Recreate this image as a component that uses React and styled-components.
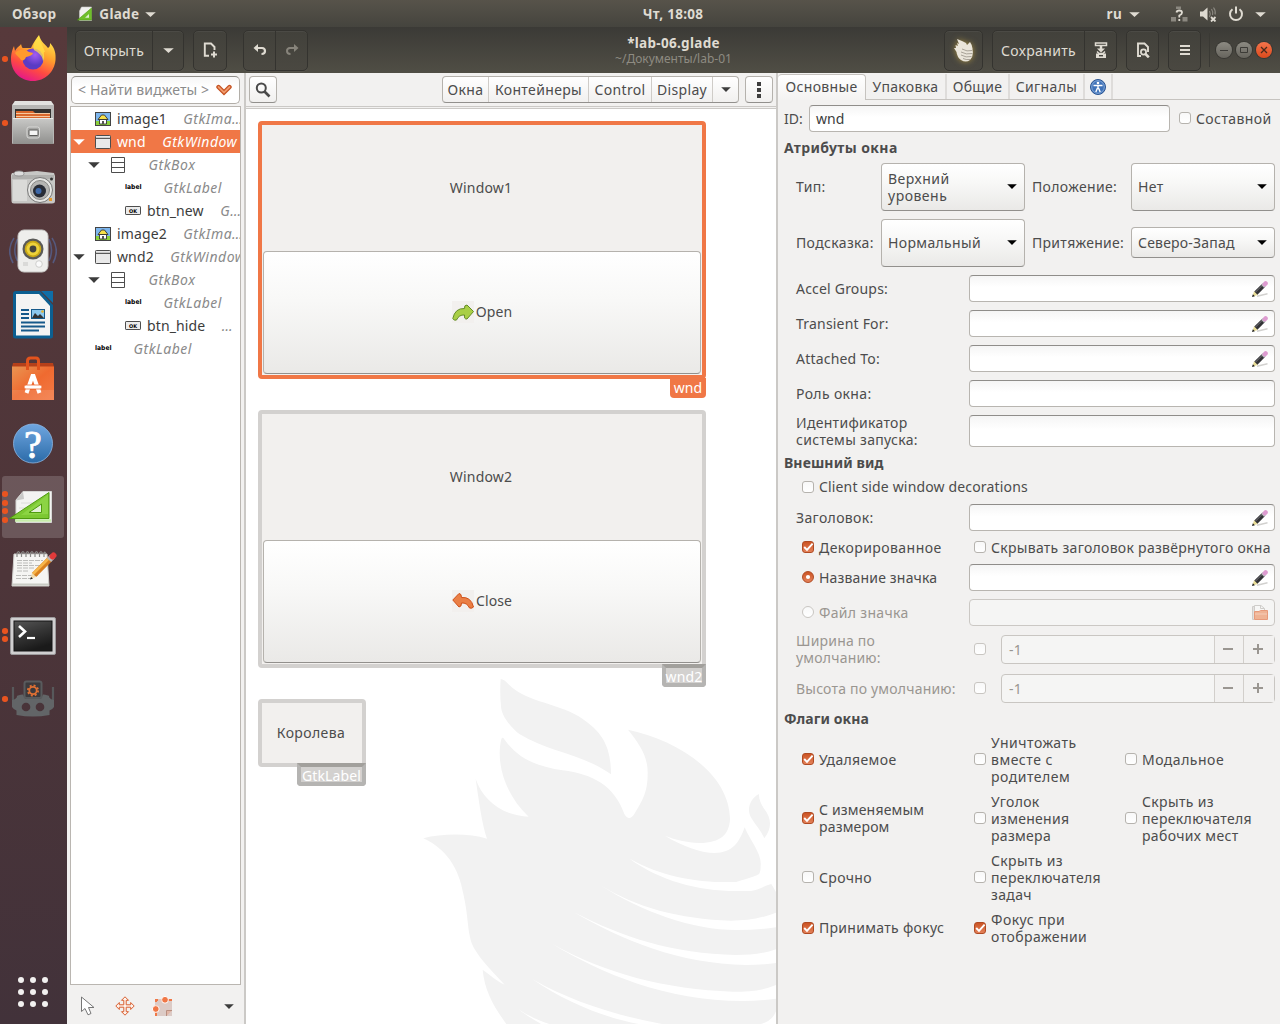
import React from "react";
import styled, { createGlobalStyle, css } from "styled-components";

const Global = createGlobalStyle`
  * { box-sizing: border-box; }
  html, body { margin: 0; padding: 0; }
  body {
    width: 1280px; height: 1024px; overflow: hidden;
    font-family: "Noto Sans", "Open Sans", sans-serif;
    font-size: 14px; line-height: 17px; color: #4c4c4c; letter-spacing: 0.35px;
  }
  svg { display: block; flex: none; }
`;

/* ---------- shell ---------- */
const Desktop = styled.div`
  display: flex; flex-direction: column; width: 1280px; height: 1024px; overflow: hidden;
`;
const TopBar = styled.div`
  height: 27px; flex: none; display: grid; grid-template-columns: 1fr auto 1fr; align-items: center;
  background: linear-gradient(#57534a, #45443e); color: #dfdbd2; font-weight: 700; font-size: 13.5px;
  padding: 1px 14px 0 12px; letter-spacing: 0.3px;
`;
const BarGroup = styled.div`
  display: flex; align-items: center; justify-content: ${(p) => (p.$end ? "flex-end" : "flex-start")};
`;
const BarItem = styled.div`
  display: flex; align-items: center; gap: ${(p) => p.$gap || 6}px; margin-left: ${(p) => p.$ml || 0}px;
`;
const Clock = styled.div`padding-left: 68px;`;
const Body = styled.div`display: flex; flex: 1; min-height: 0;`;
const Dock = styled.div`
  width: 67px; flex: none; display: flex; flex-direction: column;
  background: linear-gradient(#57393b, #4d3539 55%, #42323a);
`;
const DockItem = styled.div`
  height: 64px; flex: none; padding: 1px 3px 1px 2px;
`;
const DockTile = styled.div`
  height: 62px; display: flex; align-items: center; border-radius: 3px;
  background: ${(p) => (p.$active ? "rgba(255,255,255,0.17)" : "transparent")};
`;
const Dots = styled.div`width: 7px; display: flex; flex-direction: column; gap: 2.9px;`;
const Dot = styled.i`width: 5.6px; height: 5.6px; border-radius: 50%; background: #e95420;`;
const AppsGrid = styled.div`
  margin: auto 0 17px 18px; display: grid; grid-template-columns: repeat(3, 6px); gap: 6px;
  i { width: 6px; height: 6px; border-radius: 50%; background: #f2f1f0; }
`;
const AppWindow = styled.div`flex: 1; min-width: 0; display: flex; flex-direction: column; background: #f2f1f0;`;

/* ---------- header ---------- */
const Header = styled.div`
  height: 46px; flex: none; display: flex; align-items: flex-start; padding: 3px 8px 0;
  background: linear-gradient(#3b3a36, #504e45); color: #dfdbd2;
`;
const HeadGroup = styled.div`
  height: 41px; display: flex; margin-left: ${(p) => p.$ml || 0}px; border: 1px solid #34332f; border-radius: 5px;
  background: linear-gradient(#42413b, #4a4841); box-shadow: inset 0 1px rgba(255,255,255,0.05), 0 1px rgba(255,255,255,0.04);
`;
const HeadButton = styled.div`
  width: ${(p) => p.$w}px; display: flex; align-items: center; justify-content: center; padding-bottom: 1px;
  & + & { border-left: 1px solid #34332f; }
`;
const TitleBox = styled.div`
  flex: 1; display: flex; flex-direction: column; align-items: center; padding: 5px 0 0 95px;
`;
const Title = styled.div`font-weight: 700; font-size: 13.5px; line-height: 16px; letter-spacing: 0.3px;`;
const Subtitle = styled.div`font-size: 12px; line-height: 15px; color: #8e8b82; letter-spacing: 0;`;
const HeadRule = styled.div`width: 1px; height: 34px; margin: 3px 6px 0 8px; background: #3a3934;`;
const WinButtons = styled.div`display: flex; gap: 4px; padding-top: 12px;`;
const WinButton = styled.div`
  width: 16px; height: 16px; border-radius: 50%; display: grid; place-items: center;
  background: ${(p) => (p.$close ? "linear-gradient(#f4744c, #dc4a1c)" : "linear-gradient(#8c8a82, #66645d)")};
  box-shadow: 0 0 0 1px #383733;
`;

/* ---------- columns ---------- */
const Panes = styled.div`flex: 1; display: flex; min-height: 0;`;
const Divider = styled.div`width: 2px; flex: none; background: #cbc9c6;`;
const LeftPane = styled.div`width: 177px; flex: none; display: flex; flex-direction: column; padding: 3px 3px 0; letter-spacing: 0.12px;`;
const SearchField = styled.div`
  height: 28px; margin: 0 1px; border: 1px solid #b2aea8; border-top-color: #8f8d89; border-radius: 5px;
  background: linear-gradient(#f6f6f6, #fff 40%); display: flex; align-items: center; justify-content: space-between;
  padding: 0 7px 1px 6px; color: #8b8b8b; white-space: nowrap;
`;
const Tree = styled.div`
  height: 879px; margin-top: 2px; border: 1px solid #bab6b1; background: #fff; overflow: hidden;
`;
const TreeRow = styled.div`
  height: 23px; display: flex; align-items: center; white-space: nowrap; overflow: hidden;
  padding-left: ${(p) => p.$depth * 15 + 2}px; color: ${(p) => (p.$selected ? "#fff" : "#3c3c3c")};
  background: ${(p) => (p.$selected ? "#f07746" : "transparent")};
`;
const Expander = styled.div`width: 22px; flex: none;`;
const RowIcon = styled.div`width: 22px; flex: none;`;
const TypeName = styled.span`
  margin-left: 16.5px; font-style: italic; letter-spacing: 0.5px; color: ${(p) => (p.$selected ? "#fff" : "#8a8a8a")};
`;
const PointerBar = styled.div`flex: 1; display: flex; align-items: center; padding: 3px 7px 0 8px;`;
const PointerTool = styled.div`width: 37px; display: flex;`;
const PointerMenu = styled.div`margin-left: auto;`;

/* ---------- center ---------- */
const Center = styled.div`width: 530px; flex: none; display: flex; flex-direction: column;`;
const Toolbar = styled.div`
  height: 36px; flex: none; display: flex; padding: 3px 3px 0 3px; gap: 6px;
  border-bottom: 1px solid #cbc9c6; background: linear-gradient(#f2f1f0 33px, #cbc9c6 33px, #cbc9c6 34px, #f2f1f0 34px);
`;
const raised = css`
  border: 1px solid #b5b2ad; border-bottom-color: #92908d; border-radius: 4px;
  background: linear-gradient(#ffffff, #f8f8f7 40%, #eae9e7);
`;
const SmallButton = styled.div`
  ${raised} width: 28px; height: 27px; display: grid; place-items: center; background: linear-gradient(#fff, #f1f0ef);
`;
const Switcher = styled.div`
  ${raised} margin-left: auto; height: 27px; display: flex; background: linear-gradient(#fff, #f1f0ef);
`;
const SwitchItem = styled.div`
  width: ${(p) => p.$w}px; display: flex; align-items: center; justify-content: center; white-space: nowrap;
  & + & { border-left: 1px solid #cfccc8; }
`;
const Canvas = styled.div`
  flex: 1; background: #fff; padding: 12px; display: grid; grid-template: 1fr / 1fr; overflow: hidden;
`;
const Watermark = styled.div`grid-area: 1 / 1; justify-self: end; align-self: end; margin: 0 -16px -12px 0;`;
const Stack = styled.div`grid-area: 1 / 1; z-index: 1; display: flex; flex-direction: column; gap: 31px;`;
const Frame = styled.div`
  position: relative; width: ${(p) => p.$w}px; height: ${(p) => p.$h}px; flex: none; border-radius: 4px;
  border: 4px solid ${(p) => (p.$selected ? "#f07746" : "#d3d1cf")}; background: #f2f0ee;
  display: flex; flex-direction: column; padding: 0 1px 1px;
`;
const FrameLabel = styled.div`
  flex: 1; display: grid; place-items: center; padding: 0 2px 1px 0; letter-spacing: ${(p) => p.$ls ?? 0.2}px;
`;
const BigButton = styled.div`
  ${raised} height: 123px; display: flex; align-items: center; justify-content: center; gap: 2px; letter-spacing: 0.1px;
  padding-bottom: 2px;
`;
const ImageCell = styled.div`width: 22px; height: 22px; background: #f2f0ee;`;
const Tag = styled.div`
  position: absolute; right: -4px; color: #fff; height: ${(p) => (p.$selected ? 20 : 23)}px; white-space: nowrap;
  top: calc(100% + ${(p) => (p.$selected ? 3 : 0)}px); width: ${(p) => p.$w}px; letter-spacing: 0.15px;
  border-radius: 0 0 4px 4px; line-height: ${(p) => (p.$selected ? 20 : 17)}px;
  display: flex; justify-content: center;
  ${(p) => p.$selected ? css`background: #f07746;` : css`
    background: #d3d1cf; border: 4px solid #b5b4b2; border-top-color: #a2a09c;
  `}
`;

/* ---------- property editor ---------- */
const Right = styled.div`flex: 1; min-width: 0; display: flex; flex-direction: column;`;
const Tabs = styled.div`height: 27px; flex: none; display: flex; border-bottom: 1px solid #c6c3bf; padding-top: 1px;`;
const Tab = styled.div`
  width: ${(p) => p.$w}px; display: flex; align-items: center; justify-content: center; white-space: nowrap;
  border-right: ${(p) => (p.$active ? "1px solid #c6c3bf" : "2px solid #dedcda")};
  ${(p) => p.$active && css`
    background: linear-gradient(#fff, #f4f3f2); border-top: 1px solid #c6c3bf; border-radius: 4px 4px 0 0; margin-bottom: -1px;
    padding-bottom: 2px;
  `}
`;
const Form = styled.div`padding: 0 5px 0 6px; display: flex; flex-direction: column;`;
const Line = styled.div`
  display: flex; align-items: center; flex: none; margin-top: ${(p) => p.$mt}px; height: ${(p) => p.$h}px;
  padding: 0 0 1px ${(p) => p.$indent ?? 12}px; color: ${(p) => (p.$off ? "#9a9691" : "inherit")};
`;
const SectionTitle = styled.div`
  margin-top: ${(p) => p.$mt}px; height: 20px; line-height: 20px; font-weight: 700; flex: none;
  letter-spacing: ${(p) => p.$ls ?? 0.1}px;
`;
const Name = styled.div`
  width: ${(p) => p.$w}px; flex: none; white-space: pre-line; letter-spacing: ${(p) => p.$ls ?? 0.35}px;
`;
const Entry = styled.div`
  flex: 1; align-self: flex-start; height: ${(p) => p.$h || 27}px; margin-right: ${(p) => p.$mr || 0}px;
  display: flex; align-items: center; letter-spacing: 0.1px;
  border: 1px solid ${(p) => (p.$off ? "#cbc8c4" : "#b8b5b0")}; border-top-color: ${(p) => (p.$off ? "#cbc8c4" : "#8f8d8a")};
  border-radius: 4px; background: ${(p) => (p.$off ? "#f5f5f4" : "linear-gradient(#f5f5f5, #fff 45%)")};
  padding: 0 6px; color: #3c3c3c;
  svg { margin-left: auto; }
`;
const Combo = styled.div`
  ${raised} width: 144px; height: ${(p) => p.$h || 48}px; margin-top: ${(p) => (48 - (p.$h || 48)) >> 1}px;
  flex: none; align-self: flex-start; display: flex; align-items: center; letter-spacing: ${(p) => p.$ls ?? 0.35}px;
  justify-content: space-between; padding: 0 7px 1px 6px; white-space: pre-line;
`;
const Check = styled.div`
  width: 12px; height: 12px; flex: none; border-radius: ${(p) => (p.$round ? "50%" : "3px")};
  border: 1px solid ${(p) => (p.$on ? "#b04a22" : p.$off ? "#c9c6c2" : "#b6b3ae")};
  background: ${(p) => (p.$on ? "linear-gradient(#cb5424, #e4825a)" : "linear-gradient(#f8f8f8, #fff)")};
  display: grid; place-items: center;
  svg { overflow: visible; }
`;
const Option = styled.div`
  display: flex; align-items: center; gap: 5px; width: ${(p) => p.$w}px; flex: none; white-space: pre-line;
  margin-left: ${(p) => p.$ml || 0}px; letter-spacing: ${(p) => p.$ls ?? 0.35}px;
`;
const Spin = styled.div`
  width: 274px; height: 29px; margin-left: 15px; display: flex; border: 1px solid #c9c6c2; border-radius: 4px;
  background: #f5f5f4; color: #9a9691; align-self: flex-start;
`;
const SpinText = styled.div`flex: 1; padding: 5px 0 0 7px;`;
const SpinButton = styled.div`
  width: ${(p) => p.$w}px; border-left: 1px solid #d2cfcb; background: #f2f1f0; display: grid; place-items: center;
  padding: 0 2px 1px 0;
`;

/* ---------- icons ---------- */
const Caret = ({ w = 12, h = 6, c = "#dfdbd2" }) => (
  <svg width={w} height={h} viewBox="0 0 12 6" preserveAspectRatio="none"><path d="M0.2 0.2H11.8Q9 2.6 6 6Q3 2.600 0.2 0.2Z" fill={c} /></svg>
);
const Pencil = () => (
  <svg width="16" height="16" viewBox="0 0 16 16">
    <path d="M5 15.200L15.500 12.800" stroke="#d2d1cf" strokeWidth="1.400" />
    <path d="M3.600 12.400L11.500 4.500" stroke="#333336" strokeWidth="4.400" />
    <path d="M3.600 11L10.300 4.300" stroke="#7b7a80" strokeWidth="0.900" />
    <path d="M10.600 5.400L12.600 3.400" stroke="#b9b8bd" strokeWidth="4.400" />
    <path d="M12.800 3.200L13.600 2.400" stroke="#dd9bd0" strokeWidth="4.400" strokeLinecap="round" />
    <path d="M2 10.200L5.700 13.900L0.600 15.400Z" fill="#e8dc96" /><path d="M0 16L0.900 13.200L2.900 15.200Z" fill="#1d1d1d" />
  </svg>
);
const FolderDoc = () => (
  <svg width="16" height="16" viewBox="0 0 16 16">
    <path d="M0.5 1.5H2V14.5H0.5ZM2.5 0.5H9L12.5 3.5V8H2.5Z" fill="#f7f7f6" stroke="#cfcdca" />
    <path d="M8.5 0.8V3.5H12.3" fill="none" stroke="#cfcdca" />
    <path d="M2.5 6.5H7L8.5 5.5H15.5V14.5H2.5Z" fill="#efb394" stroke="#e79a7a" /><path d="M3 9H15" stroke="#f5cdb8" />
  </svg>
);
const Tick = () => (
  <svg width="10" height="10" viewBox="0 0 10 10"><path d="M1.2 5L4 7.8L9.6 1.6" fill="none" stroke="#fff" strokeWidth="1.9" /></svg>
);
const Bullet = () => (<svg width="10" height="10" viewBox="0 0 10 10"><circle cx="5" cy="5" r="2.100" fill="#fff" /></svg>);

const treeIcons = {
  image: (
    <svg width="16" height="14" viewBox="0 0 16 14">
      <rect x="0.5" y="0.5" width="15" height="13" fill="#7db6ee" stroke="#444" /><path d="M1 9H15V13H1Z" fill="#8bd13c" />
      <path d="M4.5 7.5H11.5V12H4.5Z" fill="#fff" stroke="#333" strokeWidth="0.9" />
      <path d="M3 7.5L6.5 3H9.5L13 7.5Z" fill="#f6e04a" stroke="#333" strokeWidth="0.9" /><path d="M7 9H9V12H7Z" fill="#555" />
    </svg>
  ),
  window: (
    <svg width="16" height="14" viewBox="0 0 16 14">
      <rect x="0.5" y="0.5" width="15" height="13" rx="0.8" fill="#e9e9e9" stroke="#4d4d4d" />
      <path d="M1 2.5H15" stroke="#c9c9c9" /><path d="M0.5 3.5H15.5" stroke="#5a5a5a" />
    </svg>
  ),
  box: (
    <svg width="16" height="16" viewBox="0 0 16 16">
      <path d="M1.5 0.5H14.5V15.5H1.5ZM1.5 5.5H14.5M1.5 10.5H14.5" fill="#fff" stroke="#4d4d4d" />
    </svg>
  ),
  label: (
    <svg width="17" height="16" viewBox="0 0 17 16">
      <text x="0" y="9.400" fontFamily="DejaVu Sans" fontWeight="700" fontSize="6.500" letterSpacing="0" textLength="16.5" lengthAdjust="spacingAndGlyphs" fill="#000">label</text>
    </svg>
  ),
  button: (
    <svg width="16" height="16" viewBox="0 0 16 16">
      <rect x="0.5" y="3.5" width="15" height="8" rx="0.6" fill="#ececec" stroke="#4d4d4d" />
      <text x="4" y="9.500" fontFamily="DejaVu Sans" fontWeight="700" fontSize="5" letterSpacing="0" textLength="8" lengthAdjust="spacingAndGlyphs" fill="#000">OK</text>
    </svg>
  ),
};

const GladeGlyph = ({ s = 48 }) => (
  <svg width={s} height={s} viewBox="0 0 48 48">
    <path d="M14 8.5H42.500V39.500H7V17Z" fill="#f3f3f2" stroke="#d6d6d4" />
    <path d="M14 8.500L15 16L7 17.500Z" fill="#c9c9c8" /><path d="M12 20H36M10 25H30" stroke="#dcdcdb" />
    <path d="M40 9.500V35.500H0.500Z" fill="#7cc832" stroke="#4f9a10" strokeLinejoin="round" />
    <path d="M39 11.500V31L12 32Z" fill="#98dc50" opacity="0.6" />
    <path d="M32.500 21V29.500H20Z" fill="#e4f0d8" stroke="#4f9a10" />
    <path d="M6 37.500H42" stroke="#c6ecaa" strokeWidth="2.500" />
  </svg>
);
const GladeSmall = () => (
  <svg width="16" height="16" viewBox="0 0 16 16">
    <path d="M4.500 1H14.500V14.500H2.500V5Z" fill="#f1f1ef" stroke="#c9c9c7" strokeWidth="0.600" />
    <path d="M14.500 2V14H0.500Z" fill="#6fbf2a" stroke="#4f9a10" strokeWidth="0.600" /><path d="M12 8V11.800H8Z" fill="#dff0d0" />
  </svg>
);

const Firefox = () => (
  <svg width="48" height="48" viewBox="0 0 48 48">
    <defs>
      <linearGradient id="ff1" x1="0.75" y1="0" x2="0.3" y2="1"><stop offset="0" stopColor="#fff04f" /><stop offset="0.4" stopColor="#ffa02d" /><stop offset="0.7" stopColor="#ff4a42" /><stop offset="1" stopColor="#e3158e" /></linearGradient>
      <radialGradient id="ff2" cx="0.6" cy="0.3"><stop offset="0" stopColor="#a35cf2" /><stop offset="1" stopColor="#5a3bc4" /></radialGradient>
    </defs>
    <path d="M30 0C32 7 36 9 39 13C41 12 41 10 41 8C46 13 47 19 46.500 25C45.500 37 36 46 24 46C11 46 2 36 2 24C2 18 4 13 5 11L6 16C8 12 11 11 12 9C13 12 13 13 14 13L22 13C24 8 27 4 30 0Z" fill="url(#ff1)" />
    <circle cx="24" cy="24" r="10.500" fill="url(#ff2)" />
    <path d="M30 1C27 5 23 10 25 15C28 17 33 19 34 26C37 22 33 16 36 17C33 9 31 7 30 1Z" fill="#ffe14a" opacity="0.75" />
    <path d="M6 18C10 14 15 14 20 17L24 18C23 21 20 21 17 22C16 25 14 26 12 25C10 22 8 21 6 18Z" fill="#ff9a2c" />
  </svg>
);
const Files = () => (
  <svg width="48" height="48" viewBox="0 0 48 48">
    <defs><linearGradient id="fl1" x1="0" y1="0" x2="0" y2="1"><stop offset="0" stopColor="#c9c9c7" /><stop offset="1" stopColor="#90908e" /></linearGradient></defs>
    <path d="M6 2H42L45 6V44Q45 45 44 45H4Q3 45 3 44V6Z" fill="#b7b7b5" /><path d="M6 2H42L44.500 6H3.500Z" fill="#e2e2e0" />
    <path d="M6 10H42V20H6Z" fill="#343230" /><path d="M7 12H24L26 14H41V20H7Z" fill="#d8672c" /><path d="M7 14.500H41M7 17.500H41" stroke="#f5c9a0" />
    <path d="M4 19H44V45H4Z" fill="url(#fl1)" /><path d="M4 19.500H44" stroke="#e9e9e7" />
    <rect x="18" y="28" width="12.500" height="11" rx="2" fill="#a5a5a3" stroke="#d8d8d6" /><rect x="20" y="31" width="9" height="5.500" rx="0.500" fill="#f5f5f4" stroke="#5a5a58" />
  </svg>
);
const Camera = () => (
  <svg width="48" height="48" viewBox="0 0 48 48">
    <path d="M3 10L16 9L28 8L45 10L46 13V38Q46 40.500 43 40.500H5Q2.500 40.500 2.500 38L2 12Z" fill="#c7c7c5" />
    <path d="M3 12H45V16H3Z" fill="#a0a09e" opacity="0.6" /><path d="M4 17H18V38H4Z" fill="#e2e2e0" opacity="0.7" />
    <ellipse cx="10" cy="10.500" rx="5" ry="2.500" fill="#ddd" stroke="#888" strokeWidth="0.800" />
    <circle cx="31" cy="27" r="12.500" fill="#e6e6e4" stroke="#777" /><circle cx="31" cy="27" r="9.500" fill="#b5b5b3" stroke="#8a8a88" />
    <circle cx="30.500" cy="28" r="6.500" fill="#282c36" /><circle cx="29.500" cy="28" r="3" fill="#3d68a8" />
    <circle cx="42.500" cy="16" r="1.500" fill="#333" /><path d="M40 35H43V38H40Z" fill="#e59a2e" />
  </svg>
);
const Speaker = () => (
  <svg width="48" height="48" viewBox="0 0 48 48">
    <g fill="none" stroke="#55597e" strokeWidth="1.600"><path d="M5 11Q-3 23 4 36M43 11Q51 23 44 36M8.500 12Q3 23 8.500 34M40 12Q45 23 40 34" /></g>
    <rect x="9" y="3" width="30" height="42" rx="6" fill="#eeeeec" stroke="#c8c8c6" />
    <circle cx="24" cy="22" r="10.500" fill="#5a5a58" /><circle cx="24" cy="22" r="8.300" fill="#c9a817" /><circle cx="24" cy="22" r="6.500" fill="#edd23b" />
    <circle cx="24" cy="22" r="3.400" fill="#44443e" /><circle cx="30" cy="37" r="3.300" fill="#fafafa" stroke="#cfcfcd" /><path d="M14 35H19V39H14Z" fill="#dadad8" />
  </svg>
);
const Writer = () => (
  <svg width="48" height="48" viewBox="0 0 48 48">
    <path d="M7 0H31L44 14V45Q44 47.500 41.500 47.500H6.500Q4 47.500 4 45V3Q4 0 7 0Z" fill="#0c5f91" />
    <path d="M7 3H30L41 15V44.500H7Z" fill="#f4f4f3" /><path d="M32 0H44V12Z" fill="#0f6ea8" />
    <path d="M12 19H20M12 23H20M12 27H20M12 31.500H36M12 35.500H36M12 39.500H30" stroke="#16598a" strokeWidth="2" />
    <rect x="22.500" y="18.500" width="13" height="9" fill="#8cc8ee" stroke="#16598a" /><path d="M23 27L26 22L29 25L31 23L35 27Z" fill="#333" /><circle cx="33.500" cy="20.500" r="1.300" fill="#e7b32a" />
  </svg>
);
const Bag = () => (
  <svg width="48" height="48" viewBox="0 0 48 48">
    <defs><linearGradient id="bg1" x1="0" y1="0" x2="1" y2="1"><stop offset="0" stopColor="#e99552" /><stop offset="0.5" stopColor="#ef6a30" /><stop offset="1" stopColor="#f37a46" /></linearGradient></defs>
    <path d="M4 8H44L45 12H3Z" fill="#b5401a" /><path d="M3 11.500H45V45H3Z" fill="url(#bg1)" /><path d="M3 35H45V45H3Z" fill="#fff" opacity="0.100" />
    <path d="M18.500 15V6Q18.500 3 21.500 3H27Q29.500 3 29.500 6V15" fill="none" stroke="#e2531d" strokeWidth="3" />
    <path d="M17.500 38L23.500 21H24.500L30.500 38" fill="none" stroke="#fff" strokeWidth="4" /><rect x="15" y="30" width="18" height="4" rx="2" fill="#fff" stroke="#ee6b32" strokeWidth="0.800" />
  </svg>
);
const HelpMark = styled.text`font: 40px "Liberation Serif", serif; letter-spacing: 0;`;
const Help = () => (
  <svg width="48" height="48" viewBox="0 0 48 48">
    <defs><linearGradient id="hp1" x1="0" y1="0" x2="0" y2="1"><stop offset="0" stopColor="#6fa6e0" /><stop offset="1" stopColor="#2b6ba8" /></linearGradient></defs>
    <circle cx="24" cy="24.500" r="19.500" fill="url(#hp1)" stroke="#8db7e4" strokeWidth="0.800" />
    <HelpMark x="24" y="38.500" textAnchor="middle" fill="#fff" stroke="#fff" strokeWidth="0.900">?</HelpMark>
  </svg>
);
const Notes = () => (
  <svg width="48" height="48" viewBox="0 0 48 48">
    <path d="M5 7H38L40 39H3Z" fill="#f5f5f3" stroke="#cfcfcc" /><path d="M3 37.500H40" stroke="#c9cbc4" strokeWidth="2" />
    <path d="M8 13.500H34M8 16H23M8 18.500H32M8 21H26M8 24H20M7 28.500H29M7 31.500H23" stroke="#bcbcba" strokeDasharray="5 1" />
    <path d="M8 10V6Q10 3 11 7M12.500 10V6Q14.500 3 15.500 7M17 10V6Q19 3 20 7M21.500 10V6Q23.500 3 24.500 7M26 10V6Q28 3 29 7M30.500 10V6Q32.500 3 33.500 7M35 10V6Q36 4 37 7" fill="none" stroke="#8a8a88" strokeWidth="1.200" />
    <path d="M25 28L41 12" stroke="#d9801f" strokeWidth="6" /><path d="M24 27L40 11" stroke="#f7b64a" strokeWidth="2.500" /><path d="M40 13L43.500 9.500" stroke="#b9b9bb" strokeWidth="6" />
    <path d="M43.500 9.500L44.500 8.500" stroke="#e23a3a" strokeWidth="6" strokeLinecap="round" /><path d="M23 26L27 30L21.500 32Z" fill="#f1dcae" /><path d="M21 32.500L22 30L24 31.500Z" fill="#222" />
  </svg>
);
const Terminal = () => (
  <svg width="48" height="48" viewBox="0 0 48 48">
    <defs><linearGradient id="tm1" x1="0" y1="0" x2="0.400" y2="1"><stop offset="0" stopColor="#555" /><stop offset="0.5" stopColor="#363636" /><stop offset="1" stopColor="#1a1a1a" /></linearGradient></defs>
    <rect x="1.500" y="6.500" width="45" height="37" rx="1.500" fill="#d0cfd0" stroke="#9c9a9c" /><rect x="5" y="10" width="38" height="30" fill="url(#tm1)" stroke="#151515" />
    <path d="M10 15L16 20.500L10 26" fill="none" stroke="#fff" strokeWidth="2.600" /><path d="M18 27H26" stroke="#fff" strokeWidth="2.200" />
  </svg>
);
const Robot = () => (
  <svg width="48" height="48" viewBox="0 0 48 48">
    <path d="M4 12V25M44 12V25" stroke="#57595b" strokeWidth="2.200" />
    <path d="M3 25Q8 24 8 21Q9 20 14 19.500L16 23.500H32L34 19.500Q39 20 40 21Q40 24 45 25V32Q43 35 40.500 35.500V40Q24 43 7.500 40V35.500Q5 35 3 32Z" fill="#626567" />
    <rect x="15.500" y="6.500" width="17" height="16.500" rx="2" fill="#3c3a3d" stroke="#595b5d" strokeWidth="2" />
    <circle cx="24" cy="15.500" r="3.700" fill="none" stroke="#de7034" strokeWidth="1.800" /><circle cx="24" cy="15.500" r="5.100" fill="none" stroke="#de7034" strokeWidth="1.800" strokeDasharray="2 2" />
    <circle cx="17" cy="32" r="4.300" fill="#493439" /><circle cx="31" cy="32" r="4.300" fill="#493439" />
  </svg>
);

const BIRD = "M22 523C80 508 160 508 213 524C198 480 190 420 179 345C200 405 255 455 338 458C270 395 238 300 256 225Q260 216 266 227C310 290 370 308 440 319C530 330 595 365 625 450Q639 474 655 450C690 395 695 370 695 325C695 275 670 240 636 197C790 230 940 330 942 465C940 510 915 537 850 537C810 535 780 528 747 515C800 548 860 567 895 567C950 567 970 535 986 490C1005 535 1038 570 1034 605Q1034 626 1028 631C1010 641 980 648 960 654C850 657 740 640 641 584C730 650 850 682 965 681H1005C1030 678 1045 665 1066 660L1080 684V746C1030 765 990 770 945 770C790 765 660 730 551 662C680 745 830 797 960 798Q1030 798 1080 790V856C1040 870 1000 873 960 873C770 870 620 820 474 745C620 830 790 900 990 903Q1050 902 1080 897V963C1040 980 1000 983 950 983C750 975 570 930 408 839C560 930 750 1010 980 1011Q1040 1010 1080 1004V1042Q1070 1070 1035 1080H738C600 1055 460 1010 350 946C440 1010 560 1060 668 1080H400C365 1068 335 1055 308 1036C330 1055 360 1070 375 1080H271C235 1030 205 980 200 917C225 935 240 950 266 962C220 915 180 870 168 840C153 795 158 760 142 690C128 610 90 555 22 523Z";
const BirdMark = () => (
  <svg width="364" height="360" viewBox="0 0 1092 1080" fill="#f2f2f2">
    <path d={BIRD} />
    <path d="M254 45Q264 45 280 63C330 115 440 120 500 165C560 205 585 250 585 331C500 270 400 265 310 210C285 190 255 155 255 125Q251 90 254 45Z" />
    <path d="M1029 390C1000 405 990 440 1008 465C1018 482 1035 500 1045 523C1070 490 1065 460 1045 435C1035 420 1028 405 1029 390Z" />
  </svg>
);
const BirdLogo = styled.svg`filter: drop-shadow(0 0 3px rgba(230, 190, 70, 0.6)); overflow: visible;`;

const GoArrow = ({ back }) => (
  <svg width="22" height="22" viewBox="0 0 22 22">
    {back ? (
      <path d="M0.800 10L7 3.500Q9.500 3.500 9.500 7.500Q19 6.500 21.500 17Q20 18.800 17.500 18Q15 12.500 9.500 13Q9.500 17 7 17Z" fill="#ea7f45" stroke="#cf5018" strokeLinejoin="round" />
    ) : (
      <path d="M21.500 10.500L15 4Q12 4 12.500 7.500Q3 7 0.800 17.500Q2 20 4.500 19Q7 13.500 12.500 14Q12 18.500 15 18Z" fill="#a9cf46" stroke="#648c28" strokeLinejoin="round" />
    )}
  </svg>
);

/* ---------- data ---------- */
const dock = [
  { icon: <Firefox />, dots: 1 }, { icon: <Files />, dots: 1 }, { icon: <Camera />, dots: 0 }, { icon: <Speaker />, dots: 0 },
  { icon: <Writer />, dots: 0 }, { icon: <Bag />, dots: 0 }, { icon: <Help />, dots: 0 }, { icon: <GladeGlyph />, dots: 4, active: true },
  { icon: <Notes />, dots: 0 }, { icon: <Terminal />, dots: 2 }, { icon: <Robot />, dots: 1 },
];
const tree = [
  { depth: 0, icon: "image", name: "image1", type: "GtkIma…" },
  { depth: 0, icon: "window", name: "wnd", type: "GtkWindow", open: true, selected: true },
  { depth: 1, icon: "box", type: "GtkBox", open: true },
  { depth: 2, icon: "label", type: "GtkLabel" },
  { depth: 2, icon: "button", name: "btn_new", type: "G…" },
  { depth: 0, icon: "image", name: "image2", type: "GtkIma…" },
  { depth: 0, icon: "window", name: "wnd2", type: "GtkWindow", open: true },
  { depth: 1, icon: "box", type: "GtkBox", open: true },
  { depth: 2, icon: "label", type: "GtkLabel" },
  { depth: 2, icon: "button", name: "btn_hide", type: "…" },
  { depth: 0, icon: "label", type: "GtkLabel" },
];
const flags = [
  { mt: 5, h: 51, items: [["Удаляемое", true], ["Уничтожать\nвместе с\nродителем", false, 0.5], ["Модальное", false, 0.5]] },
  { mt: 8, h: 51, items: [["С изменяемым\nразмером", true, 0.17], ["Уголок\nизменения\nразмера", false, 0.3], ["Скрыть из\nпереключателя\nрабочих мест", false]] },
  { mt: 8, h: 51, items: [["Срочно", false], ["Скрыть из\nпереключателя\nзадач", false]] },
  { mt: 8, h: 34, items: [["Принимать фокус", true, 0.3], ["Фокус при\nотображении", true, 0.45]] },
];
const flagWidths = [172, 151, 150];

const Toggle = ({ on, off, label, w, ml, ls, round }) => (
  <Option $w={w} $ml={ml} $ls={ls}>
    <Check $on={on} $off={off} $round={round}>{on && (round ? <Bullet /> : <Tick />)}</Check>
    <span>{label}</span>
  </Option>
);

const SizeRow = ({ mt, label }) => (
  <Line $mt={mt} $h={29} $off>
    <Name $w={178} $ls={0.2}>{label}</Name>
    <Check $off />
    <Spin>
      <SpinText>-1</SpinText>
      <SpinButton $w={29}><svg width="10" height="10" viewBox="0 0 10 10"><path d="M0 5H10" stroke="#9a9691" strokeWidth="2" /></svg></SpinButton>
      <SpinButton $w={31}><svg width="10" height="10" viewBox="0 0 10 10"><path d="M0 5H10M5 0V10" stroke="#9a9691" strokeWidth="2" /></svg></SpinButton>
    </Spin>
  </Line>
);

export default function App() {
  return (
    <Desktop>
      <Global />
      <TopBar>
        <BarGroup>
          <span>Обзор</span>
          <BarItem $ml={21}>
            <GladeSmall /><span>Glade</span><Caret w={11} h={5} />
          </BarItem>
        </BarGroup>
        <Clock>Чт, 18:08</Clock>
        <BarGroup $end>
          <BarItem $gap={7}><span>ru</span><Caret w={11} h={5} /></BarItem>
          <BarItem $ml={31} $gap={11}>
            <svg width="17" height="16" viewBox="0 0 17 16" fill="#8b8880">
              <path d="M0 11H5V15.500H0ZM11.500 11H16.500V15.500H11.500ZM5 0.500H10V3H5Z" />
              <path d="M5.500 6.500Q5.800 4.500 8.300 4.500Q11 4.500 11 6.800Q11 8.300 8.300 9.500V11.500M8.300 13V15" fill="none" stroke="#dfdbd2" strokeWidth="1.800" />
            </svg>
            <svg width="18" height="16" viewBox="0 0 18 16">
              <path d="M1 5.500H4L8.500 1.500V14.500L4 10.500H1Z" fill="#dfdbd2" />
              <path d="M10.500 5Q12 8 10.500 11M12.500 3Q14.500 6 13.500 9M14.500 1.500Q17 5 16 8.500" fill="none" stroke="#8b8880" strokeWidth="1.200" />
              <path d="M12 11L16.500 15.500M16.500 11L12 15.500" stroke="#dfdbd2" strokeWidth="1.800" />
            </svg>
            <svg width="16" height="16" viewBox="0 0 16 16" fill="none" stroke="#dfdbd2" strokeWidth="2">
              <path d="M4.500 3.200A6 6 0 1 0 11.500 3.200M8 0.500V7.500" />
            </svg>
            <Caret w={11} h={5} />
          </BarItem>
        </BarGroup>
      </TopBar>
      <Body>
        <Dock>
          {dock.map((d, i) => (
            <DockItem key={i}>
              <DockTile $active={d.active}>
                <Dots>{Array.from({ length: d.dots }, (_, k) => <Dot key={k} />)}</Dots>
                {d.icon}
              </DockTile>
            </DockItem>
          ))}
          <AppsGrid>{Array.from({ length: 9 }, (_, k) => <i key={k} />)}</AppsGrid>
        </Dock>
        <AppWindow>
          <Header>
            <HeadGroup>
              <HeadButton $w={76}>Открыть</HeadButton>
              <HeadButton $w={31}><Caret w={11} h={5} /></HeadButton>
            </HeadGroup>
            <HeadGroup $ml={9}>
              <HeadButton $w={32}>
                <svg width="15" height="16" viewBox="0 0 15 16" fill="none" stroke="#dfdbd2">
                  <path d="M6 13.800H1.800V1.500H8L11.500 5V8" strokeWidth="1.900" /><path d="M8 12.500H14M11 9.500V15.500" strokeWidth="2" />
                </svg>
              </HeadButton>
            </HeadGroup>
            <HeadGroup $ml={16}>
              <HeadButton $w={31}>
                <svg width="14" height="14" viewBox="0 0 14 14"><path d="M5 1V9L0.500 5Z" fill="#dfdbd2" /><path d="M3 5H9Q12 5.200 12 8Q12 11 8.500 11" fill="none" stroke="#dfdbd2" strokeWidth="2.200" /></svg>
              </HeadButton>
              <HeadButton $w={32}>
                <svg width="14" height="14" viewBox="0 0 14 14"><path d="M9 1V9L13.500 5Z" fill="#87847b" /><path d="M11 5H5Q2 5.200 2 8Q2 11 5.500 11" fill="none" stroke="#87847b" strokeWidth="2" /></svg>
              </HeadButton>
            </HeadGroup>
            <TitleBox>
              <Title>*lab-06.glade</Title>
              <Subtitle>~/Документы/lab-01</Subtitle>
            </TitleBox>
            <HeadGroup>
              <HeadButton $w={37}>
                <BirdLogo width="22" height="25" viewBox="0 0 22 25">
                  <path d="M4 1L9 3L13 5L14 7L17 4Q20 8 19.500 12Q21 18 17 22Q13 25 8 22Q4 19 3.500 14L1 10L3 10L2.500 7L5 8L4 5L6 6Z" fill="#eae5da" />
                  <path d="M9 11Q14 14 19 12.500M8 14Q13 17 19.500 15.500M8 17Q13 20 18.500 18.500M10 20.500Q13 22 17 21.500" fill="none" stroke="#8b857a" strokeWidth="0.700" />
                </BirdLogo>
              </HeadButton>
            </HeadGroup>
            <HeadGroup $ml={9}>
              <HeadButton $w={91}>Сохранить</HeadButton>
              <HeadButton $w={32}>
                <svg width="14" height="16" viewBox="0 0 14 16" fill="none" stroke="#dfdbd2">
                  <path d="M1.500 1H12.500V3.500H1.500Z" strokeWidth="1.500" /><path d="M7 4V8" strokeWidth="2.500" /><path d="M3 6.500H11L7 10.500Z" fill="#dfdbd2" stroke="none" />
                  <path d="M3 9.500L5 11.500H9L11 9.500" strokeWidth="1.500" /><path d="M2 11.500H12V16H2Z" fill="#dfdbd2" stroke="none" /><path d="M5 13.700H9" stroke="#45443e" strokeWidth="1.400" />
                </svg>
              </HeadButton>
            </HeadGroup>
            <HeadGroup $ml={9}>
              <HeadButton $w={31}>
                <svg width="14" height="16" viewBox="0 0 14 16" fill="none" stroke="#dfdbd2" strokeWidth="1.900">
                  <path d="M5 14H2V1.500H8.500L12 5V10" /><circle cx="7.500" cy="10" r="2.600" strokeWidth="1.700" /><path d="M9 11.500L12.800 15.300" strokeWidth="2.600" />
                </svg>
              </HeadButton>
            </HeadGroup>
            <HeadGroup $ml={9}>
              <HeadButton $w={31}>
                <svg width="10" height="12" viewBox="0 0 10 12"><path d="M0 2H10M0 6H10M0 10H10" stroke="#dfdbd2" strokeWidth="2" /></svg>
              </HeadButton>
            </HeadGroup>
            <HeadRule />
            <WinButtons>
              <WinButton><svg width="8" height="8"><path d="M0 4.500H8" stroke="#3c3b37" /></svg></WinButton>
              <WinButton><svg width="8" height="8"><path d="M0.500 1.500H7.500V6.500H0.500Z" fill="none" stroke="#3c3b37" /></svg></WinButton>
              <WinButton $close><svg width="8" height="8"><path d="M1 1L7 7M7 1L1 7" stroke="#4a2a1c" strokeWidth="1.300" /></svg></WinButton>
            </WinButtons>
          </Header>
          <Panes>
            <LeftPane>
              <SearchField>
                <span>&lt; Найти виджеты &gt;</span>
                <svg width="16" height="12" viewBox="0 0 16 12"><path d="M2.500 3L8 8.500L13.500 3" fill="none" stroke="#c4501f" strokeWidth="4.400" strokeLinecap="round" /><path d="M2.500 3L8 8.500L13.500 3" fill="none" stroke="#f09a6c" strokeWidth="1.800" strokeLinecap="round" /></svg>
              </SearchField>
              <Tree>
                {tree.map((r, i) => (
                  <TreeRow key={i} $depth={r.depth} $selected={r.selected}>
                    <Expander>{r.open && <Caret c={r.selected ? "#fff" : "#3c3c3c"} />}</Expander>
                    <RowIcon>{treeIcons[r.icon]}</RowIcon>
                    <span>{r.name}</span>
                    <TypeName $selected={r.selected}>{r.type}</TypeName>
                  </TreeRow>
                ))}
              </Tree>
              <PointerBar>
                <PointerTool>
                  <svg width="18" height="20" viewBox="0 0 18 20"><path d="M3.500 1V15.500L7 12.500L10 18.800L13 17.500L10.500 11.500H16Z" fill="#fff" stroke="#777" /></svg>
                </PointerTool>
                <PointerTool>
                  <svg width="20" height="20" viewBox="0 0 20 20"><path d="M10 0.800L13.500 4.300H11.200V8.800H15.700V6.500L19.200 10L15.700 13.500V11.200H11.200V15.700H13.500L10 19.200L6.500 15.700H8.800V11.200H4.300V13.500L0.800 10L4.300 6.500V8.800H8.800V4.300H6.500Z" fill="#fdf4ef" stroke="#d95f30" /></svg>
                </PointerTool>
                <PointerTool>
                  <svg width="20" height="20" viewBox="0 0 20 20">
                    <path d="M3 3H20V20H3Z" fill="#dccbc6" /><path d="M4 20V4H20" fill="none" stroke="#f07746" strokeWidth="2" strokeDasharray="4 3" />
                    <path d="M14.500 20V14.500H20" fill="#e2b6a6" stroke="#b98f80" /><circle cx="3.800" cy="13" r="3.400" fill="#f07746" stroke="#fff" /><circle cx="13" cy="3.800" r="3.400" fill="#f07746" stroke="#fff" />
                  </svg>
                </PointerTool>
                <PointerMenu><Caret w={10} h={5} c="#3c3c3c" /></PointerMenu>
              </PointerBar>
            </LeftPane>
            <Divider />
            <Center>
              <Toolbar>
                <SmallButton>
                  <svg width="16" height="16" viewBox="0 0 16 16" fill="none" stroke="#4a4a4a"><circle cx="6.300" cy="6" r="4.500" strokeWidth="2" /><path d="M9.500 9.500L14.500 14.500" strokeWidth="2.600" /></svg>
                </SmallButton>
                <Switcher>
                  <SwitchItem $w={45}>Окна</SwitchItem>
                  <SwitchItem $w={100}>Контейнеры</SwitchItem>
                  <SwitchItem $w={63}>Control</SwitchItem>
                  <SwitchItem $w={61}>Display</SwitchItem>
                  <SwitchItem $w={26}><Caret w={10} h={5} c="#3c3c3c" /></SwitchItem>
                </Switcher>
                <SmallButton>
                  <svg width="4" height="16" viewBox="0 0 4 16"><path d="M0 0H4V4H0ZM0 6H4V10H0ZM0 12H4V16H0Z" fill="#3f3f3f" /></svg>
                </SmallButton>
              </Toolbar>
              <Canvas>
                <Watermark><BirdMark /></Watermark>
                <Stack>
                  <Frame $w={448} $h={258} $selected>
                    <FrameLabel>Window1</FrameLabel>
                    <BigButton><ImageCell><GoArrow /></ImageCell>Open</BigButton>
                    <Tag $selected $w={36}>wnd</Tag>
                  </Frame>
                  <Frame $w={448} $h={258}>
                    <FrameLabel>Window2</FrameLabel>
                    <BigButton><ImageCell><GoArrow back /></ImageCell>Close</BigButton>
                    <Tag $w={44}>wnd2</Tag>
                  </Frame>
                  <Frame $w={108} $h={68}>
                    <FrameLabel $ls={0.4}>Королева</FrameLabel>
                    <Tag $w={69}>GtkLabel</Tag>
                  </Frame>
                </Stack>
              </Canvas>
            </Center>
            <Divider />
            <Right>
              <Tabs>
                <Tab $active $w={88}>Основные</Tab>
                <Tab $w={81}>Упаковка</Tab>
                <Tab $w={63}>Общие</Tab>
                <Tab $w={75}>Сигналы</Tab>
                <Tab $w={28}>
                  <svg width="16" height="16" viewBox="0 0 16 16"><circle cx="8" cy="8" r="7.500" fill="#3f72b8" stroke="#2b5592" /><circle cx="8" cy="8" r="6.300" fill="none" stroke="#9dbde6" strokeWidth="0.700" /><circle cx="8" cy="4" r="1.300" fill="#fff" /><path d="M3.500 6.500H12.500M8 6V9.500M7.500 9L5.800 13M8.500 9L10.200 13" stroke="#fff" strokeWidth="1.400" /></svg>
                </Tab>
              </Tabs>
              <Form>
                <Line $mt={5} $h={27} $indent={0}>
                  <Name $w={25} $ls={0}>ID:</Name>
                  <Entry $mr={9}>wnd</Entry>
                  <Toggle label="Составной" w={96} ls={0.4} />
                </Line>
                <SectionTitle $mt={6} $ls={0.4}>Атрибуты окна</SectionTitle>
                <Line $mt={5} $h={48}>
                  <Name $w={85}>Тип:</Name>
                  <Combo $ls={0.5}>{"Верхний\nуровень"}<Caret w={10} h={5} c="#000" /></Combo>
                  <Option $w={99} $ml={7}>Положение:</Option>
                  <Combo>Нет<Caret w={10} h={5} c="#000" /></Combo>
                </Line>
                <Line $mt={8} $h={48}>
                  <Name $w={85}>Подсказка:</Name>
                  <Combo>Нормальный<Caret w={10} h={5} c="#000" /></Combo>
                  <Option $w={99} $ml={7} $ls={0.3}>Притяжение:</Option>
                  <Combo $h={31} $ls={0.2}>Северо-Запад<Caret w={10} h={5} c="#000" /></Combo>
                </Line>
                {["Accel Groups:", "Transient For:", "Attached To:"].map((t) => (
                  <Line key={t} $mt={8} $h={27}><Name $w={173} $ls={0.2}>{t}</Name><Entry><Pencil /></Entry></Line>
                ))}
                <Line $mt={8} $h={27}><Name $w={173}>Роль окна:</Name><Entry /></Line>
                <Line $mt={8} $h={32}><Name $w={173} $ls={0.3}>{"Идентификатор\nсистемы запуска:"}</Name><Entry $h={32} /></Line>
                <SectionTitle $mt={6}>Внешний вид</SectionTitle>
                <Line $mt={5} $h={18} $indent={18}><Toggle label="Client side window decorations" w={300} ls={0.16} /></Line>
                <Line $mt={8} $h={27}><Name $w={173}>Заголовок:</Name><Entry><Pencil /></Entry></Line>
                <Line $mt={7} $h={19} $indent={18}>
                  <Toggle on label="Декорированное" w={172} ls={0.45} />
                  <Toggle label="Скрывать заголовок развёрнутого окна" w={304} ls={0.29} />
                </Line>
                <Line $mt={7} $h={27} $indent={18}><Toggle on round label="Название значка" w={167} ls={0.17} /><Entry><Pencil /></Entry></Line>
                <Line $mt={8} $h={27} $indent={18} $off><Toggle round off label="Файл значка" w={167} ls={0.3} /><Entry $off><FolderDoc /></Entry></Line>
                <SizeRow mt={9} label={"Ширина по\nумолчанию:"} />
                <SizeRow mt={10} label="Высота по умолчанию:" />
                <SectionTitle $mt={6}>Флаги окна</SectionTitle>
                {flags.map((row, i) => (
                  <Line key={i} $mt={row.mt} $h={row.h} $indent={18}>
                    {row.items.map(([label, on, ls], k) => <Toggle key={label} label={label} on={on} ls={ls} w={flagWidths[k]} />)}
                  </Line>
                ))}
              </Form>
            </Right>
          </Panes>
        </AppWindow>
      </Body>
    </Desktop>
  );
}
